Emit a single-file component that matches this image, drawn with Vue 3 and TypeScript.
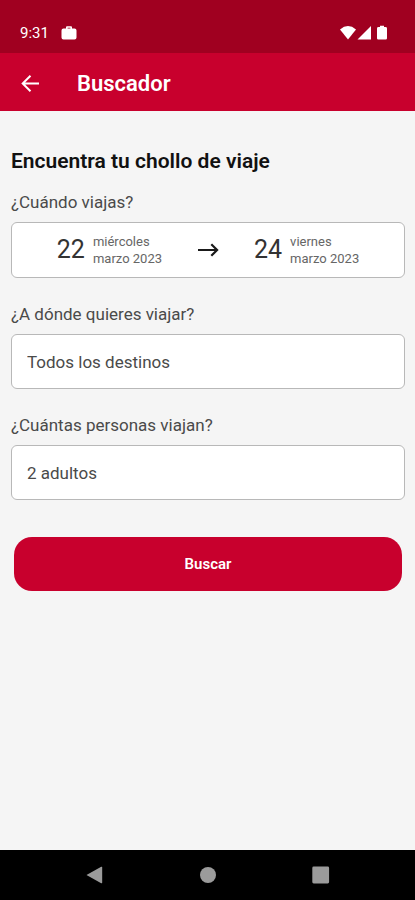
<script setup lang="ts">
import { ref } from 'vue'

interface TravelDate {
  day: number
  weekday: string
  month: string
}

const departure = ref<TravelDate>({ day: 22, weekday: 'miércoles', month: 'marzo 2023' })
const arrival = ref<TravelDate>({ day: 24, weekday: 'viernes', month: 'marzo 2023' })

const destinations: string[] = ['Todos los destinos']
const passengers: string[] = ['2 adultos']
const destination = ref(destinations[0])
const passenger = ref(passengers[0])
</script>

<template>
  <div class="screen">
    <div class="status-bar">
      <div class="status-group">
        <span class="clock">9:31</span>
        <svg class="work-icon" viewBox="0 0 16 14" aria-hidden="true">
          <path d="M5 2.4V1.4Q5 .3 6 .3H10Q11 .3 11 1.4V2.4H13.5Q15.5 2.4 15.5 4.4V11.5Q15.5 13.5 13.5 13.5H2.5Q.5 13.5 .5 11.5V4.4Q.5 2.4 2.5 2.4ZM6.6 2.4H9.4V1.7H6.6Z" fill="#fff" fill-rule="evenodd" />
        </svg>
      </div>
      <svg class="signal-icons" viewBox="0 0 48 16" aria-hidden="true">
        <path d="M0 4.4Q8 -2.4 16 4.4L8 14.5Z" fill="#fff" />
        <path d="M17.5 14.5L31 1V14.5Z" fill="#fff" />
        <path d="M40 .7H44V2H45.5Q47 2 47 3.4V13.2Q47 14.5 45.7 14.5H38.3Q37 14.5 37 13.2V3.4Q37 2 38.5 2H40Z" fill="#fff" />
      </svg>
    </div>

    <header class="app-bar">
      <button class="back" type="button" aria-label="Volver">
        <svg class="back-icon" viewBox="0 0 20 20" aria-hidden="true">
          <path d="M19 9.5H3M10.5 1.7L2.7 9.5L10.5 17.3" fill="none" stroke="#fff" stroke-width="2" />
        </svg>
      </button>
      <h1 class="title">Buscador</h1>
    </header>

    <main class="content">
      <h2 class="heading">Encuentra tu chollo de viaje</h2>
      <form class="form" @submit.prevent>
        <div class="field">
          <label class="label" for="dates">¿Cuándo viajas?</label>
          <button id="dates" class="box dates" type="button">
            <span class="date">
              <span class="day">{{ departure.day }}</span>
              <span class="date-text">
                <span>{{ departure.weekday }}</span>
                <span>{{ departure.month }}</span>
              </span>
            </span>
            <svg class="arrow-icon" viewBox="0 0 24 16" aria-hidden="true">
              <path d="M2 8H21M15.3 2.2L21.1 8L15.3 13.8" fill="none" stroke="#1a1a1a" stroke-width="2.2" />
            </svg>
            <span class="date">
              <span class="day">{{ arrival.day }}</span>
              <span class="date-text">
                <span>{{ arrival.weekday }}</span>
                <span>{{ arrival.month }}</span>
              </span>
            </span>
          </button>
        </div>

        <div class="field">
          <label class="label" for="destination">¿A dónde quieres viajar?</label>
          <select id="destination" v-model="destination" class="box picker">
            <option v-for="item in destinations" :key="item" :value="item">{{ item }}</option>
          </select>
        </div>

        <div class="field">
          <label class="label" for="passengers">¿Cuántas personas viajan?</label>
          <select id="passengers" v-model="passenger" class="box picker">
            <option v-for="item in passengers" :key="item" :value="item">{{ item }}</option>
          </select>
        </div>

        <button class="submit" type="submit">Buscar</button>
      </form>
    </main>

    <nav class="nav-bar" aria-label="Sistema">
      <button class="nav-button" type="button" aria-label="Atrás">
        <svg class="nav-icon" viewBox="0 0 18 18" aria-hidden="true">
          <path d="M.5 9L15.2 .8Q16.2 .5 16.2 1.5V16.5Q16.2 17.5 15.2 17.2Z" fill="#9b9b9b" />
        </svg>
      </button>
      <button class="nav-button" type="button" aria-label="Inicio">
        <svg class="nav-icon" viewBox="0 0 18 18" aria-hidden="true">
          <circle cx="9" cy="9" r="8" fill="#9b9b9b" />
        </svg>
      </button>
      <button class="nav-button" type="button" aria-label="Recientes">
        <svg class="nav-icon" viewBox="0 0 18 18" aria-hidden="true">
          <rect x=".3" y=".6" width="16.8" height="16.8" rx="1.4" fill="#9b9b9b" />
        </svg>
      </button>
    </nav>
  </div>
</template>

<style>
body {
  margin: 0;
  background: #f5f5f5;
}
</style>

<style scoped>
.screen {
  display: flex;
  flex-direction: column;
  min-height: 100vh;
  background: #f5f5f5;
  color: #4a4a4a;
  font-family: Roboto, "Liberation Sans", sans-serif;
}

button,
select {
  margin: 0;
  padding: 0;
  border: 0;
  background: none;
  color: inherit;
  font-family: inherit;
}

svg {
  display: block;
  flex: none;
}

.status-bar {
  display: flex;
  align-items: center;
  justify-content: space-between;
  box-sizing: border-box;
  height: 53px;
  padding: 12px 27px 0 20px;
  background: #a00020;
  color: #fff;
}

.status-group {
  display: flex;
  align-items: center;
  gap: 12px;
}

.clock {
  font-size: 15px;
  line-height: 20px;
}

.work-icon {
  width: 16px;
  height: 14px;
}

.signal-icons {
  width: 48px;
  height: 16px;
}

.app-bar {
  display: flex;
  align-items: center;
  gap: 37px;
  box-sizing: border-box;
  height: 58px;
  padding: 4px 20px 0;
  background: #c8002d;
  color: #fff;
}

.back-icon {
  width: 20px;
  height: 20px;
}

.title {
  margin: 0;
  font-size: 22px;
  font-weight: 600;
  line-height: 28px;
}

.content {
  flex: 1;
  padding: 36px 10px 36px 11px;
}

.heading {
  margin: 0 0 15px;
  color: #111;
  font-size: 21px;
  font-weight: 600;
  line-height: 28px;
}

.form {
  display: flex;
  flex-direction: column;
  gap: 24px;
}

.field {
  display: flex;
  flex-direction: column;
  gap: 8px;
}

.label {
  font-size: 17px;
  line-height: 24px;
}

.box {
  box-sizing: border-box;
  width: 100%;
  border: 1px solid #b8b8b8;
  border-radius: 6px;
  background: #fff;
}

.dates {
  display: flex;
  align-items: center;
  justify-content: center;
  gap: 34px;
  height: 56px;
}

.date {
  display: flex;
  align-items: center;
  gap: 8px;
}

.day {
  color: #333;
  font-size: 25px;
  line-height: 32px;
}

.date-text {
  display: flex;
  flex-direction: column;
  color: #666;
  font-size: 13px;
  line-height: 17px;
  text-align: left;
  white-space: nowrap;
}

.arrow-icon {
  width: 24px;
  height: 16px;
}

.picker {
  height: 55px;
  padding: 0 15px;
  appearance: none;
  font-size: 17px;
}

.submit {
  height: 54px;
  margin: 13px 3px 0;
  border-radius: 18px;
  background: #c8002d;
  color: #fff;
  font-size: 15px;
  font-weight: 600;
}

.nav-bar {
  display: flex;
  align-items: center;
  justify-content: center;
  gap: 95px;
  height: 50px;
  background: #000;
}

.nav-icon {
  width: 18px;
  height: 18px;
}
</style>
